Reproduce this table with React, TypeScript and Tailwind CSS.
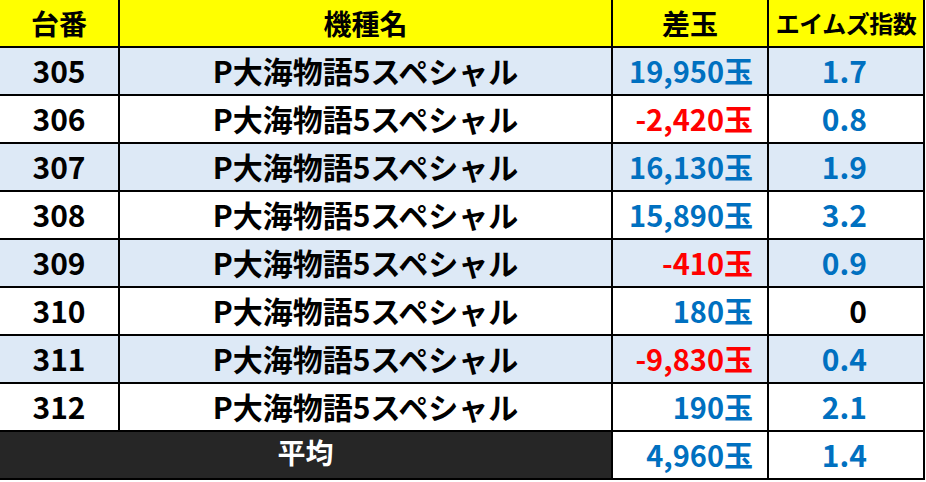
import type React from 'react'

type Row = {
	no: string
	name: string
	diff: string
	index: string
	diffColor: 'blue' | 'red'
	indexColor?: 'blue' | 'black'
}

const rows: Row[] = [
	{ no: '305', name: 'P大海物語5スペシャル', diff: '19,950玉', diffColor: 'blue', index: '1.7' },
	{ no: '306', name: 'P大海物語5スペシャル', diff: '-2,420玉', diffColor: 'red', index: '0.8' },
	{ no: '307', name: 'P大海物語5スペシャル', diff: '16,130玉', diffColor: 'blue', index: '1.9' },
	{ no: '308', name: 'P大海物語5スペシャル', diff: '15,890玉', diffColor: 'blue', index: '3.2' },
	{ no: '309', name: 'P大海物語5スペシャル', diff: '-410玉', diffColor: 'red', index: '0.9' },
	{ no: '310', name: 'P大海物語5スペシャル', diff: '180玉', diffColor: 'blue', index: '0', indexColor: 'black' },
	{ no: '311', name: 'P大海物語5スペシャル', diff: '-9,830玉', diffColor: 'red', index: '0.4' },
	{ no: '312', name: 'P大海物語5スペシャル', diff: '190玉', diffColor: 'blue', index: '2.1' },
]

const font = { fontFamily: '"Noto Sans CJK JP", "Noto Sans", sans-serif' }

const cell = 'flex items-center border-r-2 border-b-2 border-black'

const App: React.FC = () => {
	return (
		<div className="w-[926px] h-[482px] bg-white" style={font}>
			<div className="grid grid-cols-[120px_493px_156px_156px] w-[925px] font-bold text-black leading-none">
				{/* header */}
				<div className={`${cell} h-[48px] justify-center bg-[#ffff00] text-[28px]`}>台番</div>
				<div className={`${cell} h-[48px] justify-center bg-[#ffff00] text-[28px]`}>機種名</div>
				<div className={`${cell} h-[48px] justify-center bg-[#ffff00] text-[28px]`}>差玉</div>
				<div className={`${cell} h-[48px] justify-center bg-[#ffff00] text-[24px] tracking-[-0.5px]`}>
					エイムズ指数
				</div>

				{rows.map((r, idx) => {
					const bg = idx % 2 === 0 ? 'bg-[#dde9f6]' : 'bg-white'
					return [
						<div key={`${r.no}-a`} className={`${cell} ${bg} h-[48px] justify-center text-[30px] pb-[2px]`}>
							{r.no}
						</div>,
						<div key={`${r.no}-b`} className={`${cell} ${bg} h-[48px] justify-center text-[30px] pb-[2px]`}>
							{r.name}
						</div>,
						<div
							key={`${r.no}-c`}
							className={[
								cell,
								bg,
								'h-[48px] justify-end pr-[14px] text-[29px] pb-[2px]',
								r.diffColor === 'red' ? 'text-[#ff0000]' : 'text-[#0070c0]',
							].join(' ')}
						>
							{r.diff}
						</div>,
						<div
							key={`${r.no}-d`}
							className={[
								cell,
								bg,
								'h-[48px] justify-end pr-[56px] text-[30px] pb-[2px]',
								r.indexColor === 'black' ? 'text-black' : 'text-[#0070c0]',
							].join(' ')}
						>
							{r.index}
						</div>,
					]
				})}

				{/* average */}
				<div className="col-span-2 flex h-[48px] items-center justify-center border-r-2 border-b-2 border-black bg-[#262626] pb-[6px] text-[28px] text-white">
					平均
				</div>
				<div className={`${cell} h-[48px] justify-end pr-[14px] text-[29px] text-[#0070c0] pb-[2px]`}>4,960玉</div>
				<div className={`${cell} h-[48px] justify-end pr-[56px] text-[30px] text-[#0070c0] pb-[2px]`}>1.4</div>
			</div>
		</div>
	)
}

export default App
